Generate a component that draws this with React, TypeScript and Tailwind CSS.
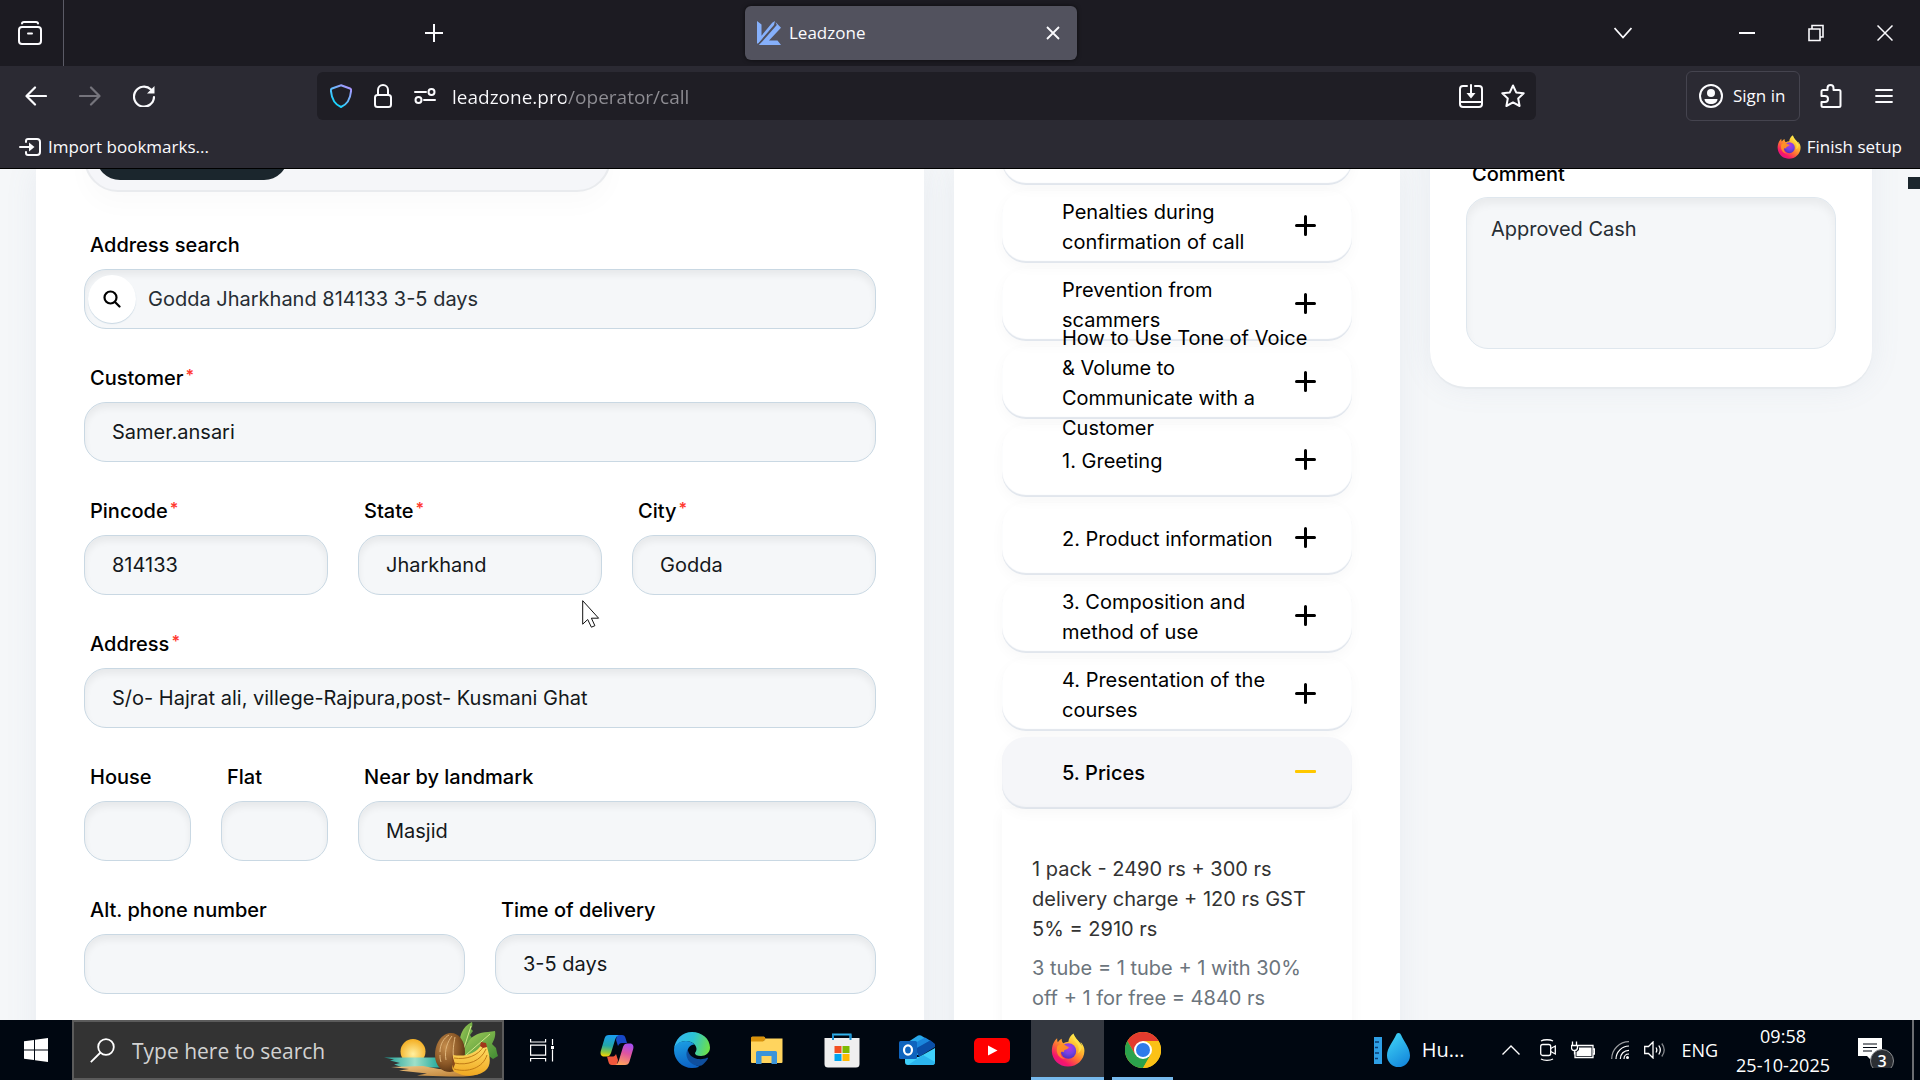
import type { ReactNode } from "react";

/* ---------- logos ---------- */

function FirefoxLogo({ id, className }: { id: string; className: string }) {
  return (
    <svg viewBox="0 0 36 36" className={className} aria-hidden="true">
      <defs>
        <linearGradient id={`${id}a`} x1="0.85" y1="0.05" x2="0.2" y2="0.95">
          <stop offset="0.05" stopColor="#fff44f" />
          <stop offset="0.35" stopColor="#ffb52e" />
          <stop offset="0.6" stopColor="#ff6b36" />
          <stop offset="0.85" stopColor="#f5156c" />
          <stop offset="1" stopColor="#e31587" />
        </linearGradient>
        <radialGradient id={`${id}b`} cx="0.55" cy="0.3" r="0.75">
          <stop offset="0" stopColor="#b833e1" />
          <stop offset="0.5" stopColor="#7542e5" />
          <stop offset="1" stopColor="#4a2fb8" />
        </radialGradient>
        <linearGradient id={`${id}c`} x1="0" y1="0" x2="1" y2="1">
          <stop offset="0" stopColor="#ff9a1f" />
          <stop offset="1" stopColor="#ff7139" />
        </linearGradient>
      </defs>
      <path
        d="M34.6 14.5c-.9-2.100-2.400-4.100-3.600-4.900 1 2 1.600 3.600 1.700 4.500-2-4.600-5.200-6.600-7.800-10.900-.5-.9-.9-1.600-1-2.700-3 1.500-5.200 5.300-5.500 8.700-2 .1-3.800.8-5.300 1.700C11.800 9.600 11.200 8 11.300 6c-1.700.8-3 2.300-4 3.800C6.600 9.300 6.500 6.200 6.500 5.500c-1.600 1.200-3.200 3.500-4.200 6C1.300 14 .9 17 .9 19.300 1.200 28.500 8.700 35.600 18 35.600c9.400 0 17.200-7.300 17.400-16.600 0-1.600-.2-3.100-.8-4.500z"
        fill={`url(#${id}a)`}
      />
      <circle cx="18.500" cy="19" r="8.200" fill={`url(#${id}b)`} />
      <path
        d="M6.500 14.500c1.500-2.300 4-3 6.800-2.300 2.200.5 3.300 2.200 5.700 2.500-.2 1.700-2.600 2.600-4.600 3.200-.8.300-.6 1.700-.5 2.400-2.200-1-3.600-.5-3.700 1.300 0 3.400 3 5.700 6.700 5.600C10 28.500 4.500 22.500 6.500 14.500z"
        fill={`url(#${id}c)`}
      />
      <path d="M24 1c-1.500 4 .5 6.500 3 9.500 2.300 2.900 3.200 7 1.500 11 2.500-1.500 4.300-4.500 4.200-8-1.800-4.200-7.500-7-8.700-12.500z" fill="#ffe14a" opacity=".8" />
    </svg>
  );
}

function LeadzoneLogo() {
  return (
    <svg viewBox="0 0 24 24" className="size-6" aria-hidden="true">
      <path d="M0 0l4.500 3.500v11.200L15.200 1.800 18 0l-1 4L1.200 22.500H0z" fill="#86b0fb" />
      <path d="M18.500 1L24 6.800 12 19.500h8.500L24 24H1.800l3.500-3.500L19.800 4z" fill="#86b0fb" />
      <path d="M1 23.500L18 4.500" stroke="#52525e" strokeWidth="1" />
    </svg>
  );
}

function FruitArt() {
  return (
    <svg viewBox="0 0 114 56" className="h-14 w-[114px] shrink-0" aria-hidden="true">
      <defs>
        <radialGradient id="sun" cx=".5" cy=".6" r=".55">
          <stop offset="0" stopColor="#fff0a0" />
          <stop offset="1" stopColor="#f5b32b" />
        </radialGradient>
        <linearGradient id="sea" x1="0" y1="0" x2="1" y2="0">
          <stop offset="0" stopColor="#179a93" />
          <stop offset=".55" stopColor="#9fe0c8" />
          <stop offset="1" stopColor="#1fa79b" />
        </linearGradient>
        <radialGradient id="coco" cx=".35" cy=".35" r=".75">
          <stop offset="0" stopColor="#c58d4c" />
          <stop offset=".6" stopColor="#8a5726" />
          <stop offset="1" stopColor="#4d2c10" />
        </radialGradient>
        <linearGradient id="leaf" x1="0" y1="0" x2="1" y2="1">
          <stop offset="0" stopColor="#a5cf5a" />
          <stop offset="1" stopColor="#3f8a33" />
        </linearGradient>
        <linearGradient id="ban" x1="0" y1="0" x2="0" y2="1">
          <stop offset="0" stopColor="#ffe169" />
          <stop offset="1" stopColor="#f0a821" />
        </linearGradient>
        <linearGradient id="sand" x1="0" y1="0" x2="1" y2="1">
          <stop offset="0" stopColor="#f0c684" />
          <stop offset="1" stopColor="#b87a2e" />
        </linearGradient>
      </defs>
      <circle cx="29" cy="29.500" r="12.500" fill="url(#sun)" />
      <path d="M0 35.500h56v10H19l-9-3 6-1.500-10-2.500 4-1z" fill="url(#sea)" />
      <path d="M7 45l32-1 16 3 32 2 10 2c-8 4-20 3.500-32 3.500l-32-1 10-2-28-3 10-1.500z" fill="url(#sand)" />
      <path d="M76 30C74 14 78 5 88 0c1 3 0 5-1 7l2 2-3 4 2 3-5 5-3 12z" fill="url(#leaf)" />
      <path d="M80 36c0-14 6-25 24-26l7-1c1 5-1 9-3 13l4 4 1 5 1 3-5 3-11-8-10 8z" fill="url(#leaf)" />
      <path d="M82 33L106 12M80 26L87 4" stroke="#d5e88a" strokeWidth="1" fill="none" />
      <path d="M51 33c0-12 7-22 16-22 8 0 14 8 14 19s-6 20-15 20c-8 0-15-6-15-17z" fill="url(#coco)" />
      <path d="M56 30c0-8 4-14 9-17M62 38c-2-10 2-19 6-24M70 38c-2-8 0-17 1-23M57 40c-1-3-1-5-1-7" stroke="#e0b67c" strokeWidth="1" fill="none" />
      <path d="M98 22l5 3c3 10 5 18-2 24-8 6-22 6-30 1-4-3-3-6-1-9l-1-8c12 2 23-1 29-11z" fill="url(#ban)" />
      <path d="M70 36c12 2 24-2 30-12M70 41c14 3 27-2 32-14M70 47c14 4 29-1 33-14" stroke="#c07a15" strokeWidth="1" fill="none" />
      <path d="M96 24l1-4 5 1 1 4-4 1z" fill="#a3361a" />
      <path d="M68 33l3 9-2 5z" fill="#8a4a1a" />
    </svg>
  );
}

const windowsLogo = (
  <svg viewBox="0 0 24 24" className="size-6" fill="#fff" aria-hidden="true">
    <path d="M0 3.300L10 1.900v9.600H0zM11 1.800L24 0v11.500H11zM0 12.500h10v9.600L0 20.700zM11 12.500h13V24l-13-1.800z" />
  </svg>
);

const taskView = (
  <svg viewBox="0 0 24 24" className="size-6" fill="none" stroke="#fff" strokeWidth="1.200" aria-hidden="true">
    <path d="M.6 1v3h15V1M.6 23.500v-3h15v3M.6 7.200h15v10H.6zM22.500 1v6M22.500 11.500v12" />
    <path d="M21 8h3v3h-3z" fill="#fff" stroke="none" />
  </svg>
);

const copilot = (
  <svg viewBox="0 0 34 30" className="h-[30px] w-[34px]" aria-hidden="true">
    <defs>
      <linearGradient id="cpa" x1=".4" y1="0" x2=".3" y2="1">
        <stop offset="0" stopColor="#1a9df0" />
        <stop offset=".5" stopColor="#23a6a8" />
        <stop offset=".8" stopColor="#8cc63f" />
        <stop offset="1" stopColor="#fbd300" />
      </linearGradient>
      <linearGradient id="cpb" x1=".7" y1="0" x2=".4" y2="1">
        <stop offset="0" stopColor="#a64df0" />
        <stop offset=".45" stopColor="#e0559f" />
        <stop offset="1" stopColor="#ffa35c" />
      </linearGradient>
    </defs>
    <path d="M17 0h5c2 0 3 1 3.500 3L27 8h-5c-2 0-3 1-4 3l-2-6z" fill="#1748c6" />
    <path d="M9 0h11c-3 0-4 2-5 5l-4 13c-1 2.500-2 3.500-4.500 3.500H4C1 21.500 0 19 .8 16L4.500 3.500C5.200 1 6.500 0 9 0z" fill="url(#cpa)" />
    <path d="M17 30h-5c-2 0-3-1-3.500-3L7 21.500h5c2 0 3-.5 4-2.500l2 6z" fill="#f0573c" />
    <path d="M25 30H14c3 0 4-2 5-5l4-13c1-2.500 2-3.500 4.500-3.500H30c3 0 4 2.500 3.200 5.500L29.500 26.500C28.800 29 27.500 30 25 30z" fill="url(#cpb)" />
  </svg>
);

const edge = (
  <svg viewBox="0 0 36 36" className="size-9" aria-hidden="true">
    <defs>
      <linearGradient id="eda" x1="0" y1=".3" x2="1" y2=".5">
        <stop offset="0" stopColor="#35b5f0" />
        <stop offset=".5" stopColor="#2cc3d5" />
        <stop offset="1" stopColor="#6be04b" />
      </linearGradient>
      <linearGradient id="edb" x1=".3" y1="0" x2=".5" y2="1">
        <stop offset="0" stopColor="#1b9de2" />
        <stop offset="1" stopColor="#0c62c4" />
      </linearGradient>
    </defs>
    <path d="M0 17C1 7 8.500 0 18 0c10 0 18 7 18 15.500 0 5.500-4.500 8.500-9 8.500-4 0-6-1.500-6-2.800 0-1 1.500-1.700 1.500-4.200 0-4-4.500-8-10.500-8C6 9 1.500 13 0 17z" fill="url(#eda)" />
    <path d="M0 18C0 13 5 9 12 9c3.500 0 6.500 1.500 8.300 3.500C16 13 13.500 16 13.500 20.500c0 7 5.500 12 12 14.200C23 35.600 20.500 36 18 36 8 36 0 28 0 18z" fill="url(#edb)" />
    <path d="M14 17c-3 4-1.500 10.500 3 14 4.500 3.500 10 4 12.500 1 2-2 4-4.500 4.500-5.500.3-.7-.3-1-1-.7-6 3-14 1-17-3-1.500-2-2.200-4-2-5.800z" fill="#0f4f9e" />
  </svg>
);

const folder = (
  <svg viewBox="0 0 32 28" className="h-7 w-8" aria-hidden="true">
    <path d="M0 2a1.500 1.500 0 011.500-1.500H13l2.500 3H0z" fill="#e3a21a" />
    <path d="M0 4.500h13l2-2h16.500V26a1 1 0 01-1 1H1a1 1 0 01-1-1z" fill="#ffd45e" />
    <path d="M0 2v3.500h12l2-2V1H2z" fill="#d9920b" />
    <path d="M5 27V16.500A1.500 1.500 0 016.500 15h18a1.500 1.500 0 011.500 1.500V28h-5.500v-8h-10v8H5z" fill="#3b93d9" />
  </svg>
);

const store = (
  <svg viewBox="0 0 36 36" className="size-9" aria-hidden="true">
    <path d="M9 9V2.500h17.500V9" fill="none" stroke="#33b5ef" strokeWidth="2" />
    <path d="M.5 6h35v26a3.500 3.500 0 01-3.500 3.500H4A3.500 3.500 0 01.5 32z" fill="#efefef" />
    <path d="M9 2.500V8M26.500 2.500V8" stroke="#1b8fd0" strokeWidth="2" />
    <path d="M10.500 14h7v7h-7z" fill="#f25022" />
    <path d="M18.500 14h7v7h-7z" fill="#7fba00" />
    <path d="M10.500 22h7v7h-7z" fill="#00a4ef" />
    <path d="M18.500 22h7v7h-7z" fill="#ffb900" />
  </svg>
);

const outlook = (
  <svg viewBox="0 0 36 30" className="h-[30px] w-9" aria-hidden="true">
    <path d="M6 9L19 .6a3 3 0 013 0L35 8.500 20 20 6 20z" fill="#28a8ea" />
    <path d="M16 13L31 5l5 4v3L20 22z" fill="#0a4fa8" />
    <path d="M14 9l12-6.500L31 5.500 16 14z" fill="#1a86dc" />
    <path d="M36 13v14a3 3 0 01-3 3H9a3 3 0 01-3-3v-5l14 0z" fill="#3fd0fb" />
    <path d="M36 27L24 20 9 30h24a3 3 0 003-3z" fill="#2bb4ee" />
    <rect y="6" width="18" height="18" rx="1.500" fill="#0f64be" />
    <ellipse cx="9" cy="15" rx="4" ry="4.600" fill="none" stroke="#fff" strokeWidth="2.200" />
  </svg>
);

const youtube = (
  <svg viewBox="0 0 36 25" className="h-[25px] w-9" aria-hidden="true">
    <rect width="36" height="25" rx="5" fill="#f00" />
    <path d="M14 7.500l9.500 5-9.500 5z" fill="#fff" />
  </svg>
);

const chrome = (
  <svg viewBox="0 0 36 36" className="size-9" aria-hidden="true">
    <circle cx="18" cy="18" r="18" fill="#fbc116" />
    <path d="M2.400 9A18 18 0 0133.600 9H18l-7.800 13.500z" fill="#e33b2e" />
    <path d="M2.400 9A18 18 0 0018 36l7.800-13.500L10.200 22.500z" fill="#2ba24c" />
    <path d="M33.600 9A18 18 0 0118 36l7.800-13.500L25.800 9z" fill="#fbc116" />
    <circle cx="18" cy="18" r="9" fill="#fff" />
    <circle cx="18" cy="18" r="7" fill="#2f7bea" />
  </svg>
);

/* ---------- browser chrome ---------- */

function TabStrip() {
  return (
    <div className="flex h-[66px] items-center bg-[#1c1b22] text-[#fbfbfe]">
      <div className="flex h-full w-16 shrink-0 items-center border-r border-[#5b5b66] pl-[18px]">
        <button aria-label="Tab manager">
          <svg viewBox="0 0 24 24" className="size-6" fill="none" stroke="currentColor" strokeWidth="2" strokeLinecap="round">
            <path d="M4 2.500C4 1.500 5 1 6 1h12c1 0 2 .5 2 1.500" />
            <rect x="1" y="6" width="22" height="17" rx="3" />
            <path d="M10 12.500h4" />
          </svg>
        </button>
      </div>
      <div className="flex flex-1 items-center pl-[361px]">
        <button aria-label="New tab">
          <svg viewBox="0 0 18 18" className="size-[18px]" stroke="currentColor" strokeWidth="2">
            <path d="M9 0v18M0 9h18" />
          </svg>
        </button>
        <div className="ml-[302px] flex h-[54px] w-[332px] items-center rounded-md bg-[#52525e] pr-[17px] pl-3 shadow-[0_0_4px_rgba(0,0,0,0.6)]">
          <LeadzoneLogo />
          <span className="ml-2 flex-1 text-[17px]">Leadzone</span>
          <button aria-label="Close tab">
            <svg viewBox="0 0 14 14" className="size-[14px]" stroke="currentColor" strokeWidth="1.800">
              <path d="M1 1l12 12M13 1L1 13" />
            </svg>
          </button>
        </div>
      </div>
      <div className="flex items-center pr-[27px]">
        <button aria-label="List all tabs" className="mr-[107px]">
          <svg viewBox="0 0 18 12" className="h-3 w-[18px]" fill="none" stroke="currentColor" strokeWidth="1.800">
            <path d="M.5 1L9 10.500 17.500 1" />
          </svg>
        </button>
        <button aria-label="Minimize" className="mr-[53px]">
          <svg viewBox="0 0 16 16" className="size-4" stroke="currentColor" strokeWidth="2">
            <path d="M0 8h16" />
          </svg>
        </button>
        <button aria-label="Restore" className="mr-[53px]">
          <svg viewBox="0 0 16 18" className="h-[18px] w-4" fill="none" stroke="currentColor" strokeWidth="1.600">
            <path d="M1 5h11v11.500H1zM4 5V1.500h11V13h-3" />
          </svg>
        </button>
        <button aria-label="Close window">
          <svg viewBox="0 0 16 16" className="size-4" stroke="currentColor" strokeWidth="1.500">
            <path d="M.5.5l15 15M15.500.5l-15 15" />
          </svg>
        </button>
      </div>
    </div>
  );
}

function Toolbar() {
  return (
    <div className="flex h-15 items-center text-[#fbfbfe]">
      <div className="flex w-[317px] shrink-0 items-center gap-8 pl-[25px]">
        <button aria-label="Back">
          <svg viewBox="0 0 22 20" className="h-5 w-[22px]" fill="none" stroke="currentColor" strokeWidth="2.200" strokeLinecap="round" strokeLinejoin="round">
            <path d="M10 1.500L1.500 10l8.500 8.500M2 10h19" />
          </svg>
        </button>
        <button aria-label="Forward" className="text-[#75747c]">
          <svg viewBox="0 0 22 20" className="h-5 w-[22px]" fill="none" stroke="currentColor" strokeWidth="2.200" strokeLinecap="round" strokeLinejoin="round">
            <path d="M12 1.500l8.500 8.500-8.500 8.500M20 10H1" />
          </svg>
        </button>
        <button aria-label="Reload">
          <svg viewBox="0 0 22 22" className="size-[22px]" fill="none" stroke="currentColor" strokeWidth="2.200" strokeLinecap="round">
            <path d="M18 4.500A10 10 0 1021 12" />
            <path d="M21.500 1v7.500H14z" fill="currentColor" stroke="none" />
          </svg>
        </button>
      </div>
      <div className="flex h-12 w-[1219px] items-center rounded-md bg-[#1f1e25] pr-[11px] pl-[13px]">
        <svg viewBox="0 0 22 24" className="h-6 w-[22px] shrink-0" fill="none" strokeWidth="2" aria-hidden="true">
          <defs>
            <linearGradient id="shield" x1="1" y1="0" x2="0.2" y2="1">
              <stop offset="0" stopColor="#b98eff" />
              <stop offset="0.5" stopColor="#6ab8fb" />
              <stop offset="1" stopColor="#00ddff" />
            </linearGradient>
          </defs>
          <path d="M11 1.200l9 3.300c1 .4 1.200 1 1.100 2C20.500 14 18.500 20 11 23 3.500 20 1.500 14 .9 6.500c-.1-1 .1-1.600 1.100-2z" stroke="url(#shield)" />
        </svg>
        <svg viewBox="0 0 18 24" className="ml-[22px] h-6 w-[18px] shrink-0" fill="none" stroke="currentColor" strokeWidth="2" aria-hidden="true">
          <rect x="1" y="11" width="16" height="12" rx="2.500" />
          <path d="M4 11V6a5 5 0 0110 0v5" />
        </svg>
        <svg viewBox="0 0 22 16" className="ml-[22px] h-4 w-[22px] shrink-0" fill="none" stroke="currentColor" strokeWidth="2" aria-hidden="true">
          <path d="M1 4h11M10 12h11" strokeLinecap="round" />
          <circle cx="17.500" cy="4" r="3" />
          <circle cx="4.500" cy="12" r="3" />
        </svg>
        <input
          aria-label="Address"
          type="text"
          defaultValue="leadzone.pro/operator/call"
          className="ml-4 w-0 flex-1 bg-[linear-gradient(to_right,#fbfbfe_114px,#8f8e94_114px)] bg-clip-text pt-[2px] text-[19px] leading-8 text-transparent outline-none"
        />
        <button aria-label="Install app" className="mr-[18px]">
          <svg viewBox="0 0 24 24" className="size-6" fill="none" stroke="currentColor" strokeWidth="2" strokeLinecap="round">
            <path d="M8 2H4a3 3 0 00-3 3v15a3 3 0 003 3h16a3 3 0 003-3V5a3 3 0 00-3-3h-4M1 18h22M12 1v10" />
            <path d="M7.500 9h9L12 14.500z" fill="currentColor" stroke="none" />
          </svg>
        </button>
        <button aria-label="Bookmark this page">
          <svg viewBox="0 0 24 24" className="size-6" fill="none" stroke="currentColor" strokeWidth="2" strokeLinejoin="round">
            <path d="M12 1.500l3.200 6.900 7.500.9-5.500 5.200 1.400 7.500L12 18.400 5.400 22l1.400-7.500L1.300 9.300l7.500-.9z" />
          </svg>
        </button>
      </div>
      <div className="ml-auto flex items-center pr-[27px]">
        <button className="flex h-[50px] w-[114px] items-center rounded-md border border-[#45444f] pl-3 text-[17px]">
          <svg viewBox="0 0 24 24" className="mr-[10px] size-6" aria-hidden="true">
            <circle cx="12" cy="12" r="11" fill="none" stroke="currentColor" strokeWidth="2" />
            <circle cx="12" cy="9" r="4" fill="currentColor" />
            <path d="M5.500 15h13c0 3-3 5-6.500 5s-6.500-2-6.500-5z" fill="currentColor" />
          </svg>
          Sign in
        </button>
        <button aria-label="Extensions" className="ml-5">
          <svg viewBox="0 0 22 24" className="h-6 w-[22px]" fill="none" stroke="currentColor" strokeWidth="2" strokeLinejoin="round">
            <path d="M1.500 12V7.500A1.500 1.500 0 013 6h4.500V4a3 3 0 016 0v2H19a1.500 1.500 0 011.500 1.500v14A1.500 1.500 0 0119 23H3a1.500 1.500 0 01-1.500-1.500V18H5a3 3 0 000-6z" />
          </svg>
        </button>
        <button aria-label="Menu" className="ml-[33px]">
          <svg viewBox="0 0 18 16" className="h-4 w-[18px]" stroke="currentColor" strokeWidth="1.800" strokeLinecap="round">
            <path d="M1 2h16M1 8h16M1 14h16" />
          </svg>
        </button>
      </div>
    </div>
  );
}

function BookmarksBar() {
  return (
    <div className="flex h-[42px] items-center justify-between pr-[18px] pl-[19px] text-[17px] text-[#fbfbfe]">
      <button className="flex items-center gap-[7px]">
        <svg viewBox="0 0 22 18" className="h-[18px] w-[22px]" fill="none" stroke="currentColor" strokeWidth="2" strokeLinecap="round" aria-hidden="true">
          <path d="M7 4V3a2 2 0 012-2h9a3 3 0 013 3v10a3 3 0 01-3 3H9a2 2 0 01-2-2v-1M1 9h10" />
          <path d="M10 4.500L15.500 9 10 13.500z" fill="currentColor" stroke="none" />
        </svg>
        Import bookmarks...
      </button>
      <button className="flex items-center gap-[6px]">
        <FirefoxLogo id="ffs" className="size-6" />
        Finish setup
      </button>
    </div>
  );
}

/* ---------- order form ---------- */

const inputBox =
  "block h-15 w-full rounded-[22px] border border-[#c9d8e3] bg-[#f5f7f9] shadow-[inset_0_5px_7px_rgba(0,0,0,0.06)] outline-none";

type FieldProps = { id: string; label: string; value?: string; required?: boolean; span: string };

function Field({ id, label, value = "", required = false, span }: FieldProps) {
  return (
    <div className={span}>
      <label htmlFor={id} className="mb-[9px] flex pl-[6px] leading-[30px] font-medium text-black">
        {label}
        {required && <span className="ml-[2px] text-base leading-6 font-semibold text-[#ff3b30]">*</span>}
      </label>
      <input id={id} type="text" defaultValue={value} className={`${inputBox} px-[27px] text-[#14181b]`} />
    </div>
  );
}

function OrderForm() {
  return (
    <section className="bg-white px-12 shadow-[0_0_30px_rgba(120,140,165,0.1)]">
      <div className="-mt-[57px] flex h-20 w-[527px] rounded-[34px] border-2 border-[#e9ebee] bg-[#f5f6f9] p-[10px] shadow-[0_14px_24px_rgba(0,0,0,0.02)]">
        <div className="w-[192px] rounded-[24px] bg-[#1b262d]" />
      </div>
      <form className="mt-[38px] grid grid-cols-6 gap-x-[30px] gap-y-[34px]">
        <div className="col-span-6">
          <label htmlFor="search" className="mb-[9px] block pl-[6px] leading-[30px] font-medium text-black">
            Address search
          </label>
          <div className={`${inputBox} flex items-center pl-[3px]`}>
            <button
              type="button"
              aria-label="Search address"
              className="flex size-12 items-center justify-center rounded-full bg-white shadow-[0_1px_1px_#c9d8e3]"
            >
              <svg viewBox="0 0 18 18" className="size-[18px]" fill="none" stroke="#000" strokeWidth="2.200" strokeLinecap="round">
                <circle cx="7.500" cy="7.500" r="6" />
                <path d="M12 12l4.500 4.500" />
              </svg>
            </button>
            <input
              id="search"
              type="text"
              defaultValue="Godda Jharkhand 814133 3-5 days"
              className="ml-3 h-full flex-1 bg-transparent text-[#262d33] outline-none"
            />
          </div>
        </div>
        <Field id="customer" label="Customer" value="Samer.ansari" required span="col-span-6" />
        <Field id="pincode" label="Pincode" value="814133" required span="col-span-2" />
        <Field id="state" label="State" value="Jharkhand" required span="col-span-2" />
        <Field id="city" label="City" value="Godda" required span="col-span-2" />
        <Field id="address" label="Address" value="S/o- Hajrat ali, villege-Rajpura,post- Kusmani Ghat" required span="col-span-6" />
        <Field id="house" label="House" span="col-span-1" />
        <Field id="flat" label="Flat" span="col-span-1" />
        <Field id="landmark" label="Near by landmark" value="Masjid" span="col-span-4" />
        <Field id="phone" label="Alt. phone number" span="col-span-3" />
        <Field id="delivery" label="Time of delivery" value="3-5 days" span="col-span-3" />
      </form>
    </section>
  );
}

/* ---------- call script ---------- */

const topics: string[][] = [
  [],
  ["Penalties during", "confirmation of call"],
  ["Prevention from", "scammers"],
  ["How to Use Tone of Voice", "& Volume to", "Communicate with a", "Customer"],
  ["1. Greeting"],
  ["2. Product information"],
  ["3. Composition and", "method of use"],
  ["4. Presentation of the", "courses"],
];

const itemBox =
  "flex h-[72px] w-full items-center rounded-[24px] pr-9 pl-[60px] text-left leading-[30px] whitespace-nowrap shadow-[inset_0_-2px_1px_#e1e6ed,0_4px_14px_rgba(0,0,0,0.03)]";

function CallScript() {
  return (
    <section className="bg-white px-12 shadow-[0_0_30px_rgba(120,140,165,0.1)]">
      <ul className="-mt-14 flex flex-col gap-[6px] text-black">
        {topics.map((lines, i) => (
          <li key={i}>
            <button className={itemBox} aria-label={lines.length ? undefined : "Topic"}>
              <span className="relative w-0 flex-1">
                {lines.map((line) => (
                  <span key={line} className="block">
                    {line}
                  </span>
                ))}
              </span>
              <svg viewBox="0 0 21 21" className="mb-1 size-[21px]" stroke="#000" strokeWidth="3" strokeLinecap="round" aria-hidden="true">
                <path d="M10.500 1.500v18M1.500 10.500h18" />
              </svg>
            </button>
          </li>
        ))}
        <li>
          <button className={`${itemBox} bg-[#f5f6f9] font-medium`} aria-expanded="true">
            <span className="flex-1">5. Prices</span>
            <svg viewBox="0 0 21 21" className="mb-1 size-[21px]" aria-hidden="true">
              <rect y="9" width="21" height="3" rx="1" fill="#ffc800" />
            </svg>
          </button>
          <div className="h-80 px-[30px] pt-[45px] leading-[30px] whitespace-nowrap shadow-[0_4px_14px_rgba(0,0,0,0.04)]">
            <p className="text-[#333]">
              1 pack - 2490 rs + 300 rs
              <br />
              delivery charge + 120 rs GST
              <br />
              5% = 2910 rs
            </p>
            <p className="mt-[9px] text-[#6c757d]">
              3 tube = 1 tube + 1 with 30%
              <br />
              off + 1 for free = 4840 rs
            </p>
          </div>
        </li>
      </ul>
    </section>
  );
}

function CommentCard() {
  return (
    <section className="-mt-10 self-start rounded-b-[36px] bg-white px-9 pt-[30px] pb-[38px] shadow-[0_2px_1px_#e6eaee,0_0_30px_rgba(120,140,165,0.1)]">
      <label htmlFor="comment" className="mb-2 block pl-[6px] leading-[30px] font-medium text-black">
        Comment
      </label>
      <textarea
        id="comment"
        defaultValue="Approved Cash"
        className="block h-[152px] w-full resize-none rounded-[22px] border border-[#dfe7ee] bg-[#f5f7f9] px-6 py-4 leading-[30px] text-[#262d33] shadow-[inset_0_6px_8px_rgba(0,0,0,0.05)] outline-none"
      />
    </section>
  );
}

/* ---------- taskbar ---------- */

const apps: { name: string; icon: ReactNode }[] = [
  { name: "Task View", icon: taskView },
  { name: "Copilot", icon: copilot },
  { name: "Microsoft Edge", icon: edge },
  { name: "File Explorer", icon: folder },
  { name: "Microsoft Store", icon: store },
  { name: "Outlook", icon: outlook },
  { name: "YouTube", icon: youtube },
];

function Taskbar() {
  return (
    <footer className="flex h-15 shrink-0 items-center bg-[#000711] text-lg text-white">
      <button aria-label="Start" className="flex h-full w-[72px] items-center justify-center">
        {windowsLogo}
      </button>
      <label className="flex h-full w-[432px] items-center border-2 border-[#5b5b5b] bg-[#333] pr-1 pl-4">
        <svg viewBox="0 0 25 25" className="size-[25px] shrink-0" fill="none" stroke="#fff" strokeWidth="1.800" aria-hidden="true">
          <circle cx="16" cy="9" r="7.800" />
          <path d="M10.500 14.500L.8 24.200" />
        </svg>
        <input
          aria-label="Search"
          type="text"
          placeholder="Type here to search"
          className="ml-[17px] w-0 flex-1 bg-transparent pt-[2px] text-[21px] outline-none placeholder:text-[#d2d2d2]"
        />
        <FruitArt />
      </label>
      {apps.map((a) => (
        <button key={a.name} aria-label={a.name} className="flex h-full w-[75px] items-center justify-center">
          {a.icon}
        </button>
      ))}
      <button aria-label="Firefox" className="ml-[2px] flex h-full w-[73px] items-center justify-center border-b-[3px] border-[#76b9ed] bg-[#343840] pt-[2px]">
        <FirefoxLogo id="fft" className="size-[34px]" />
      </button>
      <button aria-label="Chrome" className="ml-2 flex h-full w-[61px] items-center justify-center border-b-[3px] border-[#76b9ed] pt-[2px]">
        {chrome}
      </button>
      <div className="ml-auto flex h-full items-center">
        <button className="flex items-center">
          <svg viewBox="0 0 36 34" className="h-[34px] w-9" aria-hidden="true">
            <defs>
              <linearGradient id="drop" x1="0.2" y1="0" x2="0.7" y2="1">
                <stop offset="0" stopColor="#3fd3f5" />
                <stop offset="1" stopColor="#1488dc" />
              </linearGradient>
            </defs>
            <rect y="4" width="8" height="27" fill="#2e9fe6" />
            <path d="M1 9h4M1 14.500h3M1 20h4M1 25.500h3" stroke="#0a3e74" strokeWidth="1.600" />
            <path d="M24.500 0c1.500 0 2 .8 2.600 2C30 9 36 15 36 22.500a11.500 11.500 0 01-23 0C13 15 19 9 22 2c.6-1.200 1-2 2.500-2z" fill="url(#drop)" />
          </svg>
          <span className="ml-3 text-xl">Hu...</span>
        </button>
        <button aria-label="Show hidden icons" className="ml-[38px]">
          <svg viewBox="0 0 18 10" className="h-[10px] w-[18px]" fill="none" stroke="#fff" strokeWidth="1.400">
            <path d="M.5 9.500L9 1l8.500 8.500" />
          </svg>
        </button>
        <svg viewBox="0 0 16 22" className="ml-5 h-[22px] w-4" fill="none" stroke="#fff" strokeWidth="1.300" aria-hidden="true">
          <rect x=".7" y="5.500" width="10" height="11" rx="2" />
          <path d="M10.700 9.500L15.300 7v8l-4.600-2.500M1 2C4 .3 10 .3 13 2M1 20c3 1.700 9 1.700 12 0" />
        </svg>
        <svg viewBox="0 0 24 18" className="ml-[15px] h-[18px] w-6" fill="none" stroke="#fff" strokeWidth="1.300" aria-hidden="true">
          <path d="M6 4.500h16v12H4v-6M22.500 8h1v5h-1M1.500.5v4M5.500.5v4M.5 4.500h6v2c0 2-1 3-3 3s-3-1-3-3zM3.500 9.500v4" />
          <path d="M8 6.500h12.500V15H5.500v-4L8 9z" fill="#fff" stroke="none" />
        </svg>
        <svg viewBox="0 0 18 18" className="ml-4 size-[18px]" fill="none" stroke="#fff" strokeWidth="1.200" aria-hidden="true">
          <path d="M.7 18C.7 8.500 8.500.7 18 .7" opacity=".6" />
          <path d="M5 18C5 11 11 5 18 5M9.300 18c0-5 3.700-8.700 8.700-8.700M13 18c0-3 2-5 5-5" />
          <circle cx="16.500" cy="16.500" r="1.500" fill="#fff" stroke="none" />
        </svg>
        <svg viewBox="0 0 22 18" className="ml-[15px] h-[18px] w-[22px]" fill="none" stroke="#fff" strokeWidth="1.300" aria-hidden="true">
          <path d="M.7 5.500h3.800L9 1v16l-4.500-4.500H.7zM12 6.500c1 1.500 1 3.500 0 5M14.800 4.500c2 3 2 6 0 9" />
          <path d="M17.800 2.500c3 4 3 9 0 13" opacity=".5" />
        </svg>
        <span className="ml-[15px]">ENG</span>
        <div className="ml-[18px] flex h-full flex-col items-center pt-[2px] leading-[29px]">
          <span>09:58</span>
          <span>25-10-2025</span>
        </div>
        <button aria-label="3 new notifications" className="relative ml-7 size-9">
          <svg viewBox="0 0 36 36" className="size-9" aria-hidden="true">
            <path d="M0 6h24v18H14v5l-5-5H0z" fill="#fff" />
            <path d="M5 12h14M5 15.500h14M5 19h9" stroke="#000711" strokeWidth="1.200" />
            <circle cx="24" cy="29" r="11.500" fill="#2b2e33" stroke="#8b8d90" />
          </svg>
          <span className="absolute top-[17px] left-3 w-6 text-center text-base leading-6 font-semibold">3</span>
        </button>
        <div className="mr-[6px] ml-[18px] h-full w-[2px] bg-[#6b6e73]" />
      </div>
    </footer>
  );
}

export default function App() {
  return (
    <div className="relative flex h-screen flex-col overflow-hidden bg-[#f5f7f9] font-['Open_Sans',sans-serif]">
      <header className="relative z-10 shrink-0 border-b border-black bg-[#2b2a33]">
        <TabStrip />
        <Toolbar />
        <BookmarksBar />
      </header>
      <main className="relative grid min-h-0 flex-1 grid-cols-[888fr_446fr_442fr] gap-[30px] overflow-hidden pr-12 pl-9 font-['Inter',sans-serif] text-xl">
        <OrderForm />
        <CallScript />
        <CommentCard />
        <div className="absolute top-2 right-0 size-3 bg-[#1b262d]" />
      </main>
      <Taskbar />
      <svg viewBox="0 0 18 28" className="absolute top-[600px] left-[582px] h-7 w-[18px]" aria-hidden="true">
        <path d="M.7.700v23.500l5-4.700 3.700 7.700 3.500-1.500-3.500-7.500h7.200z" fill="#fff" stroke="#111" strokeWidth="1" />
      </svg>
    </div>
  );
}
